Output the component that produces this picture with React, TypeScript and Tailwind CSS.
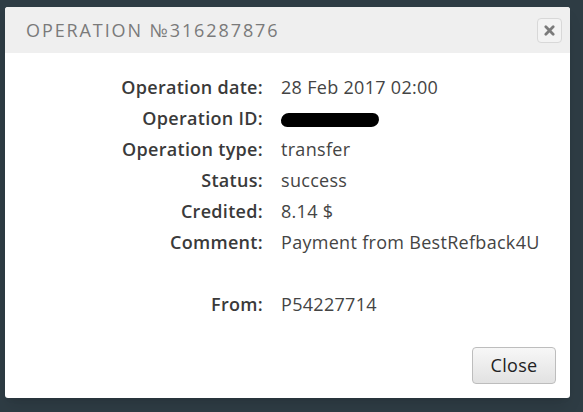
export default function App() {
  const rows: [string, React.ReactNode][] = [
    ['Operation date:', '28 Feb 2017 02:00'],
    ['Operation ID:', <span className="inline-block h-[14px] w-[98px] rounded-full bg-black align-middle -skew-x-6" />],
    ['Operation type:', 'transfer'],
    ['Status:', 'success'],
    ['Credited:', '8.14 $'],
    ['Comment:', 'Payment from BestRefback4U'],
    ['', ''],
    ['From:', 'P54227714'],
  ]

  return (
    <div className="h-[412px] w-[583px] bg-[#2e3c44] pl-[5px] pt-[7px] font-['Open_Sans',sans-serif]">
      <div className="w-[565px] h-[391px] rounded-[3px] bg-white shadow-lg flex flex-col overflow-hidden">
        <div className="h-[46px] bg-[#efefef] flex items-center justify-between pl-[21px] pr-[8px]">
          <h1 className="text-[18px] tracking-[1.9px] text-[#7a7a7a] uppercase">Operation №316287876</h1>
          <button className="w-[25px] h-[25px] rounded-[4px] border border-[#d8d8d8] bg-[#f3f3f3] flex items-center justify-center">
            <svg className="w-[11px] h-[11px]" viewBox="0 0 12 12" fill="none" stroke="#7b7b7b" strokeWidth={3} strokeLinecap="round">
              <path d="M2 2l8 8M10 2l-8 8" />
            </svg>
          </button>
        </div>

        <div className="pt-[19px] flex-1">
          {rows.map(([label, value], i) => (
            <div key={i} className="flex h-[31px] items-center text-[18px] tracking-[0.3px]">
              <div className="w-[258px] text-right font-semibold text-[#3a3a3a]">{label}</div>
              <div className="pl-[18px] text-[#444]">{value}</div>
            </div>
          ))}
        </div>

        <div className="flex justify-end pr-[14px] pb-[14px]">
          <button className="w-[84px] h-[37px] rounded-[4px] border border-[#bdbdbd] bg-gradient-to-b from-[#f7f7f7] to-[#e2e2e2] text-[18px] tracking-[0.3px] text-[#222]">
            Close
          </button>
        </div>
      </div>
    </div>
  )
}
